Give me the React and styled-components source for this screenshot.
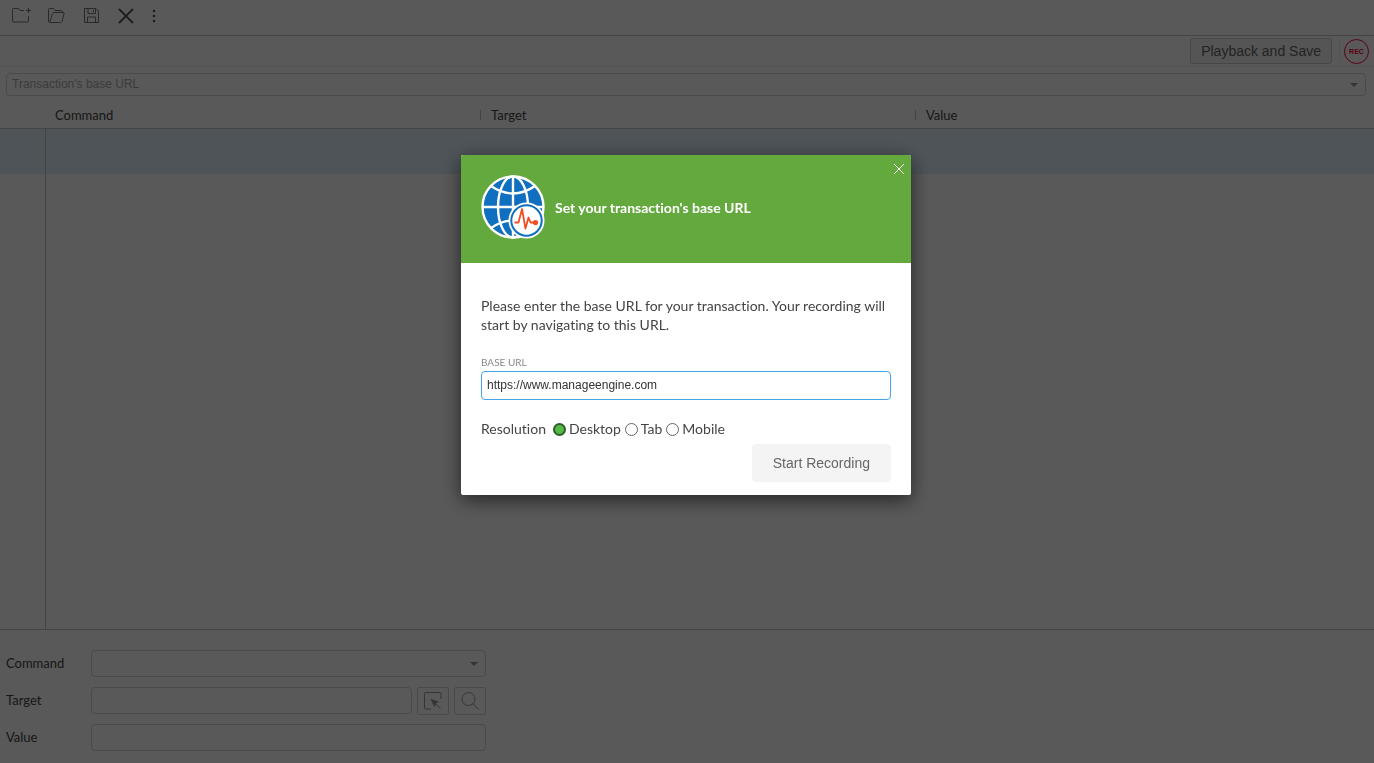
import React, { useState } from "react";
import styled, { createGlobalStyle } from "styled-components";

const columns = ["Command", "Target", "Value"];
const resolutions = ["Desktop", "Tab", "Mobile"];

const NewIcon = () => (
  <svg width="20" height="16" viewBox="0 0 20 16" fill="none" stroke="currentColor">
    <path d="M12 2.500H8L6.500 0.500H1.500Q0.500 0.500 0.500 1.500V13Q0.500 14 1.500 14H15.500Q16.500 14 16.500 13V8" />
    <path d="M16.500 0V5M14 2.500H19" />
  </svg>
);

const OpenIcon = () => (
  <svg width="18" height="16" viewBox="0 0 18 16" fill="none" stroke="currentColor">
    <path d="M2 14.500Q0.500 14.500 0.500 13V1.500Q0.500 0.500 1.500 0.500H5.500L7 2.500H13.500Q14.500 2.500 14.500 4V4.500" />
    <path d="M6 4.500H15Q16.500 4.500 16 6L14 13.500Q13.500 14.500 12.500 14.500H2.500Q1.500 14.500 2 13.500L4.500 5.500Q5 4.500 6 4.500Z" />
  </svg>
);

const SaveIcon = () => (
  <svg width="16" height="16" viewBox="0 0 16 16" fill="none" stroke="currentColor">
    <path d="M0.500 0.500H12L14.500 3V14.500H0.500ZM4 0.500V5.500H11.500V0.500M3.500 14.500V9H11.500V14.500M9.500 2V4" />
  </svg>
);

const DeleteIcon = () => (
  <svg width="16" height="16" viewBox="0 0 16 16" fill="none" stroke="currentColor" strokeWidth="1.800">
    <path d="M1 1L15 15M15 1L1 15" />
  </svg>
);

const MoreIcon = () => (
  <svg width="4" height="14" viewBox="0 0 4 14" fill="currentColor">
    <circle cx="2" cy="2" r="1.300" />
    <circle cx="2" cy="7" r="1.300" />
    <circle cx="2" cy="12" r="1.300" />
  </svg>
);

const SelectIcon = () => (
  <svg width="18" height="18" viewBox="0 0 18 18" fill="none" stroke="currentColor">
    <path d="M7 17H1.500Q0.500 17 0.500 16V1.500Q0.500 0.500 1.500 0.500H16Q17 0.500 17 1.500V7" />
    <path d="M11 11L16.500 16.500" />
    <path d="M6.500 7L15 9.500L12 11.500L10.500 15.500Z" fill="currentColor" stroke="none" />
  </svg>
);

const FindIcon = () => (
  <svg width="18" height="18" viewBox="0 0 18 18" fill="none" stroke="currentColor">
    <circle cx="7.500" cy="7" r="6.500" />
    <path d="M12 11.500L17.500 17.500" />
  </svg>
);

const CloseIcon = () => (
  <svg width="12" height="12" viewBox="0 0 12 12" fill="none" stroke="currentColor">
    <path d="M1 1L11 11M11 1L1 11" />
  </svg>
);

const GlobeLogo = () => (
  <svg width="64" height="64" viewBox="0 0 64 64" fill="none" stroke="#fff" strokeWidth="2.400">
    <circle cx="32" cy="32" r="30.500" fill="#116fbf" />
    <ellipse cx="32" cy="32" rx="15" ry="30.500" />
    <path d="M32 1.500V62.500M1.500 32H62.500M10 11Q32 26 54 11M10 53Q32 38 54 53" />
    <circle cx="45.500" cy="45.500" r="18" fill="#fff" stroke="none" />
    <circle cx="45.500" cy="45.500" r="15.200" stroke="#116fbf" strokeWidth="2" />
    <path
      d="M33.500 47.500H37.500L41 34L44.500 53.500L47.500 42.500L49.500 47.500H54"
      stroke="#f04e23"
      strokeWidth="1.800"
      strokeLinejoin="round"
    />
    <circle cx="54.500" cy="47.500" r="2.600" fill="#f04e23" stroke="none" />
  </svg>
);

const App = () => {
  const [isOpen, setIsOpen] = useState(true);
  const [baseUrl, setBaseUrl] = useState("https://www.manageengine.com");
  const [resolution, setResolution] = useState("Desktop");

  const closeModal = () => {
    setIsOpen(false);
  };

  return (
    <>
      <GlobalStyle />
      <Page>
        <Toolbar>
          <IconButton aria-label="New"><NewIcon /></IconButton>
          <IconButton aria-label="Open"><OpenIcon /></IconButton>
          <IconButton aria-label="Save"><SaveIcon /></IconButton>
          <IconButton aria-label="Delete"><DeleteIcon /></IconButton>
          <IconButton aria-label="More"><MoreIcon /></IconButton>
        </Toolbar>
        <ActionBar>
          <PlaybackButton>Playback and Save</PlaybackButton>
          <Divider />
          <RecordButton>REC</RecordButton>
        </ActionBar>
        <UrlBar>
          <SelectWrapper>
            <UrlSelect aria-label="Transaction's base URL">
              <option>Transaction's base URL</option>
            </UrlSelect>
          </SelectWrapper>
        </UrlBar>
        <Steps>
          <thead>
            <tr>
              <NumberHead />
              {columns.map((name) => (
                <ColumnHead key={name}>
                  <span>{name}</span>
                </ColumnHead>
              ))}
            </tr>
          </thead>
          <tbody>
            <SelectedRow>
              <NumberCell />
              <td colSpan={3} />
            </SelectedRow>
            <tr>
              <NumberCell />
              <td colSpan={3} />
            </tr>
          </tbody>
        </Steps>
        <Editor>
          <Field>
            <label htmlFor="command">Command</label>
            <SelectWrapper>
              <FieldSelect id="command" />
            </SelectWrapper>
          </Field>
          <Field>
            <label htmlFor="target">Target</label>
            <FieldInput id="target" />
            <ToolButton aria-label="Select target"><SelectIcon /></ToolButton>
            <ToolButton aria-label="Find target"><FindIcon /></ToolButton>
          </Field>
          <Field>
            <label htmlFor="value">Value</label>
            <FieldInput id="value" />
          </Field>
        </Editor>
      </Page>
      {isOpen && (
        <Overlay>
          <Modal role="dialog" aria-labelledby="modal-title">
            <ModalHeader>
              <GlobeLogo />
              <ModalTitle id="modal-title">Set your transaction's base URL</ModalTitle>
              <CloseButton aria-label="Close" onClick={closeModal}>
                <CloseIcon />
              </CloseButton>
            </ModalHeader>
            <ModalBody>
              <Message>
                Please enter the base URL for your transaction. Your recording will
                start by navigating to this URL.
              </Message>
              <UrlLabel htmlFor="base-url">BASE URL</UrlLabel>
              <UrlInput
                id="base-url"
                value={baseUrl}
                onChange={(e) => setBaseUrl(e.target.value)}
              />
              <Resolution>
                <legend>Resolution</legend>
                {resolutions.map((name) => (
                  <RadioLabel key={name}>
                    <Radio
                      type="radio"
                      name="resolution"
                      checked={resolution === name}
                      onChange={() => setResolution(name)}
                    />
                    {name}
                  </RadioLabel>
                ))}
              </Resolution>
              <StartButton onClick={closeModal}>Start Recording</StartButton>
            </ModalBody>
          </Modal>
        </Overlay>
      )}
    </>
  );
};

export default App;

const GlobalStyle = createGlobalStyle`
  * {
    box-sizing: border-box;
  }

  body {
    margin: 0;
    background: #fff;
    color: #444;
    font-family: Lato, sans-serif;
    font-size: 13px;
    font-variant-ligatures: none;
  }

  button, input, select {
    margin: 0;
    font-family: "Liberation Sans", Arial, sans-serif;
  }

  button {
    padding: 0;
    cursor: pointer;
  }
`;

const Page = styled.div`
  display: flex;
  flex-direction: column;
  min-height: 100vh;
`;

const Toolbar = styled.header`
  display: flex;
  align-items: center;
  gap: 18px;
  height: 36px;
  padding: 0 12px 4px;
  border-bottom: 1px solid #c4c4c4;
`;

const IconButton = styled.button`
  display: flex;
  border: none;
  background: none;
  color: #777;

  &:first-child {
    margin-right: -2px;
  }

  &:nth-child(n + 4) {
    color: #555;
  }
`;

const ActionBar = styled.div`
  display: flex;
  align-items: center;
  justify-content: flex-end;
  height: 31px;
  padding: 0 5px;
  border-bottom: 1px solid #ededed;
`;

const PlaybackButton = styled.button`
  height: 26px;
  padding: 0 10px;
  border: 1px solid #ccc;
  border-radius: 3px;
  background: #f4f4f4;
  color: #666;
  font-size: 14px;
`;

const Divider = styled.span`
  width: 1px;
  height: 22px;
  margin: 0 4px 0 7px;
  background: #eee;
`;

const RecordButton = styled.button`
  width: 25px;
  height: 25px;
  border: 1px solid #ff0038;
  border-radius: 50%;
  background: none;
  color: #ff0038;
  font-size: 7px;
  font-weight: 700;
`;

const UrlBar = styled.div`
  display: flex;
  padding: 6px 8px 6px 6px;
`;

const SelectWrapper = styled.div`
  position: relative;
  flex: 1;

  &::after {
    content: "";
    position: absolute;
    top: calc(50% - 2px);
    right: 8px;
    border: 4px solid transparent;
    border-top-color: #999;
    border-bottom: none;
    pointer-events: none;
  }
`;

const UrlSelect = styled.select`
  display: block;
  width: 100%;
  height: 23px;
  padding: 0 5px 2px;
  appearance: none;
  border: 1px solid #d4d4d4;
  border-radius: 4px;
  background: #fff;
  color: #aaa;
  font-size: 12px;
`;

const Steps = styled.table`
  flex: 1;
  display: grid;
  grid-template-rows: 27px 1fr;
  border-bottom: 1px solid #c4c4c4;

  thead, tbody {
    display: grid;
  }

  tbody {
    grid-template-rows: 45px 1fr;
  }

  tr {
    display: grid;
    grid-template-columns: 46px 1fr;
  }

  thead tr {
    grid-template-columns: 45px repeat(3, 1fr);
    padding-right: 24px;
    border-bottom: 1px solid #c4c4c4;
  }

  th, td {
    padding: 0;
  }
`;

const NumberHead = styled.th``;

const ColumnHead = styled.th`
  display: flex;
  align-items: center;
  font-weight: 400;
  text-align: left;

  span {
    padding-left: 10px;
    line-height: 10px;
  }

  & + & span {
    border-left: 1px solid #c4c4c4;
  }
`;

const SelectedRow = styled.tr`
  background: #dff0fb;
`;

const NumberCell = styled.td`
  border-right: 1px solid #c4c4c4;
`;

const Editor = styled.section`
  display: flex;
  flex-direction: column;
  gap: 10px;
  width: 486px;
  max-width: 100%;
  padding: 20px 0 12px 6px;
`;

const Field = styled.div`
  display: flex;
  align-items: center;
  gap: 5px;
  height: 27px;

  label {
    width: 80px;
    padding-bottom: 2px;
  }
`;

const FieldInput = styled.input`
  flex: 1;
  min-width: 0;
  height: 27px;
  padding: 0 5px;
  border: 1px solid #d4d4d4;
  border-radius: 4px;
  background: #fff;
`;

const FieldSelect = styled.select`
  display: block;
  width: 100%;
  height: 27px;
  appearance: none;
  border: 1px solid #d4d4d4;
  border-radius: 4px;
  background: #fff;
`;

const ToolButton = styled.button`
  display: flex;
  align-items: center;
  justify-content: center;
  width: 32px;
  height: 28px;
  border: 1px solid #d4d4d4;
  border-radius: 2px;
  background: none;
  color: #999;
`;

const Overlay = styled.div`
  position: fixed;
  inset: 0;
  display: flex;
  align-items: flex-start;
  justify-content: center;
  padding: 155px 2px 0 0;
  background: rgba(0, 0, 0, 0.65);
`;

const Modal = styled.div`
  width: 450px;
  border-radius: 2px;
  overflow: hidden;
  background: #fff;
  box-shadow: 0 5px 20px rgba(0, 0, 0, 0.6);
`;

const ModalHeader = styled.div`
  position: relative;
  display: flex;
  align-items: center;
  gap: 10px;
  height: 108px;
  padding: 0 20px 4px;
  background: #64a93e;
  color: #fff;
`;

const ModalTitle = styled.h1`
  margin: 0;
  font-size: 14px;
  font-weight: 700;
`;

const CloseButton = styled.button`
  position: absolute;
  top: 8px;
  right: 6px;
  display: flex;
  border: none;
  background: none;
  color: #fff;
`;

const ModalBody = styled.div`
  display: flex;
  flex-direction: column;
  padding: 33px 20px 13px;
`;

const Message = styled.p`
  margin: 0 0 22px;
  font-size: 14px;
  line-height: 19px;
`;

const UrlLabel = styled.label`
  margin-bottom: 3px;
  color: #888;
  font-size: 10px;
  line-height: 12px;
`;

const UrlInput = styled.input`
  height: 29px;
  padding: 0 5px 2px;
  border: 1px solid #47a3e6;
  border-radius: 4px;
  outline: none;
  color: #333;
  font-size: 12px;
`;

const Resolution = styled.fieldset`
  display: flex;
  gap: 4px;
  margin: 18px 0 4px;
  padding: 0;
  border: none;
  font-size: 14px;
  line-height: 22px;

  legend {
    float: left;
    margin-right: 3px;
    padding: 0;
  }
`;

const RadioLabel = styled.label`
  display: flex;
  align-items: center;
  gap: 3px;
`;

const Radio = styled.input`
  width: 13px;
  height: 13px;
  margin: 0;
  appearance: none;
  border: 1px solid #666;
  border-radius: 50%;
  background: #fff;

  &:checked {
    border: 2px solid #2d5f2a;
    background: #55b947;
  }
`;

const StartButton = styled.button`
  align-self: flex-end;
  height: 38px;
  padding: 0 21px;
  border: none;
  border-radius: 4px;
  background: #f4f4f4;
  color: #666;
  font-size: 14px;
`;
